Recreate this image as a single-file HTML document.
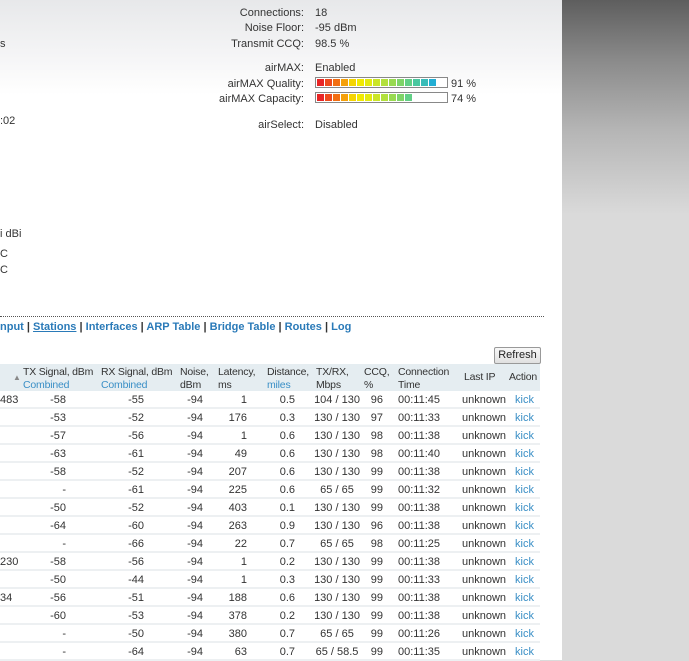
<!DOCTYPE html>
<html><head><meta charset="utf-8"><style>
*{margin:0;padding:0;box-sizing:border-box}
body{width:689px;height:660px;overflow:hidden;position:relative;font-family:"Liberation Sans",Arial,sans-serif;font-size:11px;color:#333;background:#dadada}
#bg{position:absolute;left:562px;top:0;width:127px;height:660px;background:linear-gradient(#5e5e5e 0px,#8a8a8a 60px,#b5b5b5 130px,#d6d6d6 205px,#dadada 215px,#dadada 660px)}
#panel{position:absolute;left:0;top:0;width:562px;height:660px;background:linear-gradient(#e7e8ea 0px,#f6f6f7 60px,#fff 95px,#fff)}
.t{position:absolute;white-space:nowrap;line-height:13px}
.l{text-align:right;width:200px;left:104px}
.v{left:315px}
.bar{position:absolute;left:315px;width:133px;height:11px;border:1px solid #888;background:#fff;display:flex;padding:1px 0 1px 1px;gap:1px}
.bar i{display:block;width:7px;height:7px}
#dots{position:absolute;left:0;top:316px;width:544px;border-top:1px dotted #555}
#nav{position:absolute;left:0;top:321px;font-weight:bold;color:#333;white-space:nowrap}
#nav a{color:#2a7ab8;text-decoration:none}
#btn{position:absolute;left:494px;top:347px;width:47px;height:17px;border:1px solid #999;border-radius:2px;background:linear-gradient(#f8f8f8,#e0e0e0);text-align:center;line-height:15px;font-size:11px;color:#222}
#hd{position:absolute;left:0;top:364px;width:540px;height:27px;background:#e5edf1}
#hd .t{font-size:10.5px;letter-spacing:-0.2px}
.b1{color:#3a8fc6}
.r{position:absolute;left:0;width:540px;height:18px;border-bottom:2px solid #edf0f2}
.r span{position:absolute;top:3px;white-space:nowrap}
.a{left:0}
.b{left:20px;width:46px;text-align:right}
.c{left:100px;width:44px;text-align:right}
.d{left:170px;width:33px;text-align:right}
.e{left:210px;width:37px;text-align:right}
.f{left:260px;width:35px;text-align:right}
.g{left:305px;width:64px;text-align:center}
.h{left:365px;width:18px;text-align:right}
.k{left:398px}
.m{left:462px}
.n{left:515px;color:#3a8fc6}
</style></head><body>
<div id="bg"></div>
<div id="panel">
<div class="t l" style="top:7px">Connections:</div><div class="t v" style="top:7px">18</div>
<div class="t l" style="top:22px">Noise Floor:</div><div class="t v" style="top:22px">-95 dBm</div>
<div class="t l" style="top:38px">Transmit CCQ:</div><div class="t v" style="top:38px">98.5 %</div>
<div class="t" style="left:0;top:38px">s</div>
<div class="t l" style="top:62px">airMAX:</div><div class="t v" style="top:62px">Enabled</div>
<div class="t l" style="top:78px">airMAX Quality:</div>
<div class="bar" style="top:77px"><i style="background:#e82525"></i><i style="background:#ee4a1c"></i><i style="background:#f26e12"></i><i style="background:#f5a00a"></i><i style="background:#f5d400"></i><i style="background:#f2ea00"></i><i style="background:#e3ea10"></i><i style="background:#cbe628"></i><i style="background:#b2e03c"></i><i style="background:#98da50"></i><i style="background:#7ed468"></i><i style="background:#62cf86"></i><i style="background:#4ac8a0"></i><i style="background:#38bcb8"></i><i style="background:#22aed4"></i></div>
<div class="t" style="left:451px;top:78px">91 %</div>
<div class="t l" style="top:93px">airMAX Capacity:</div>
<div class="bar" style="top:92px"><i style="background:#e82525"></i><i style="background:#ee4a1c"></i><i style="background:#f26e12"></i><i style="background:#f5a00a"></i><i style="background:#f5d400"></i><i style="background:#f2ea00"></i><i style="background:#e3ea10"></i><i style="background:#cbe628"></i><i style="background:#b2e03c"></i><i style="background:#98da50"></i><i style="background:#7ed468"></i><i style="background:#62cf86"></i></div>
<div class="t" style="left:451px;top:93px">74 %</div>
<div class="t" style="left:0;top:115px">:02</div>
<div class="t l" style="top:119px">airSelect:</div><div class="t v" style="top:119px">Disabled</div>
<div class="t" style="left:0;top:228px">i dBi</div>
<div class="t" style="left:0;top:248px">C</div>
<div class="t" style="left:0;top:264px">C</div>
<div id="dots"></div>
<div id="nav"><a>nput</a> | <a style="text-decoration:underline">Stations</a> | <a>Interfaces</a> | <a>ARP Table</a> | <a>Bridge Table</a> | <a>Routes</a> | <a>Log</a></div>
<div id="btn">Refresh</div>
<div id="hd">
<div class="t" style="left:13px;top:7px;color:#888;font-size:8px">▲</div>
<div class="t" style="left:23px;top:2px">TX Signal, dBm<br><span class="b1">Combined</span></div>
<div class="t" style="left:101px;top:2px">RX Signal, dBm<br><span class="b1">Combined</span></div>
<div class="t" style="left:180px;top:2px">Noise,<br>dBm</div>
<div class="t" style="left:218px;top:2px">Latency,<br>ms</div>
<div class="t" style="left:267px;top:2px">Distance,<br><span class="b1">miles</span></div>
<div class="t" style="left:316px;top:2px">TX/RX,<br>Mbps</div>
<div class="t" style="left:364px;top:2px">CCQ,<br>%</div>
<div class="t" style="left:398px;top:2px">Connection<br>Time</div>
<div class="t" style="left:464px;top:7px">Last IP</div>
<div class="t" style="left:509px;top:7px">Action</div>
</div>
<div class="r" style="top:391px"><span class="a">483</span><span class="b">-58</span><span class="c">-55</span><span class="d">-94</span><span class="e">1</span><span class="f">0.5</span><span class="g">104 / 130</span><span class="h">96</span><span class="k">00:11:45</span><span class="m">unknown</span><span class="n">kick</span></div>
<div class="r" style="top:409px"><span class="b">-53</span><span class="c">-52</span><span class="d">-94</span><span class="e">176</span><span class="f">0.3</span><span class="g">130 / 130</span><span class="h">97</span><span class="k">00:11:33</span><span class="m">unknown</span><span class="n">kick</span></div>
<div class="r" style="top:427px"><span class="b">-57</span><span class="c">-56</span><span class="d">-94</span><span class="e">1</span><span class="f">0.6</span><span class="g">130 / 130</span><span class="h">98</span><span class="k">00:11:38</span><span class="m">unknown</span><span class="n">kick</span></div>
<div class="r" style="top:445px"><span class="b">-63</span><span class="c">-61</span><span class="d">-94</span><span class="e">49</span><span class="f">0.6</span><span class="g">130 / 130</span><span class="h">98</span><span class="k">00:11:40</span><span class="m">unknown</span><span class="n">kick</span></div>
<div class="r" style="top:463px"><span class="b">-58</span><span class="c">-52</span><span class="d">-94</span><span class="e">207</span><span class="f">0.6</span><span class="g">130 / 130</span><span class="h">99</span><span class="k">00:11:38</span><span class="m">unknown</span><span class="n">kick</span></div>
<div class="r" style="top:481px"><span class="b">-</span><span class="c">-61</span><span class="d">-94</span><span class="e">225</span><span class="f">0.6</span><span class="g">65 / 65</span><span class="h">99</span><span class="k">00:11:32</span><span class="m">unknown</span><span class="n">kick</span></div>
<div class="r" style="top:499px"><span class="b">-50</span><span class="c">-52</span><span class="d">-94</span><span class="e">403</span><span class="f">0.1</span><span class="g">130 / 130</span><span class="h">99</span><span class="k">00:11:38</span><span class="m">unknown</span><span class="n">kick</span></div>
<div class="r" style="top:517px"><span class="b">-64</span><span class="c">-60</span><span class="d">-94</span><span class="e">263</span><span class="f">0.9</span><span class="g">130 / 130</span><span class="h">96</span><span class="k">00:11:38</span><span class="m">unknown</span><span class="n">kick</span></div>
<div class="r" style="top:535px"><span class="b">-</span><span class="c">-66</span><span class="d">-94</span><span class="e">22</span><span class="f">0.7</span><span class="g">65 / 65</span><span class="h">98</span><span class="k">00:11:25</span><span class="m">unknown</span><span class="n">kick</span></div>
<div class="r" style="top:553px"><span class="a">230</span><span class="b">-58</span><span class="c">-56</span><span class="d">-94</span><span class="e">1</span><span class="f">0.2</span><span class="g">130 / 130</span><span class="h">99</span><span class="k">00:11:38</span><span class="m">unknown</span><span class="n">kick</span></div>
<div class="r" style="top:571px"><span class="b">-50</span><span class="c">-44</span><span class="d">-94</span><span class="e">1</span><span class="f">0.3</span><span class="g">130 / 130</span><span class="h">99</span><span class="k">00:11:33</span><span class="m">unknown</span><span class="n">kick</span></div>
<div class="r" style="top:589px"><span class="a">34</span><span class="b">-56</span><span class="c">-51</span><span class="d">-94</span><span class="e">188</span><span class="f">0.6</span><span class="g">130 / 130</span><span class="h">99</span><span class="k">00:11:38</span><span class="m">unknown</span><span class="n">kick</span></div>
<div class="r" style="top:607px"><span class="b">-60</span><span class="c">-53</span><span class="d">-94</span><span class="e">378</span><span class="f">0.2</span><span class="g">130 / 130</span><span class="h">99</span><span class="k">00:11:38</span><span class="m">unknown</span><span class="n">kick</span></div>
<div class="r" style="top:625px"><span class="b">-</span><span class="c">-50</span><span class="d">-94</span><span class="e">380</span><span class="f">0.7</span><span class="g">65 / 65</span><span class="h">99</span><span class="k">00:11:26</span><span class="m">unknown</span><span class="n">kick</span></div>
<div class="r" style="top:643px"><span class="b">-</span><span class="c">-64</span><span class="d">-94</span><span class="e">63</span><span class="f">0.7</span><span class="g">65 / 58.5</span><span class="h">99</span><span class="k">00:11:35</span><span class="m">unknown</span><span class="n">kick</span></div>
</div>
</body></html>
